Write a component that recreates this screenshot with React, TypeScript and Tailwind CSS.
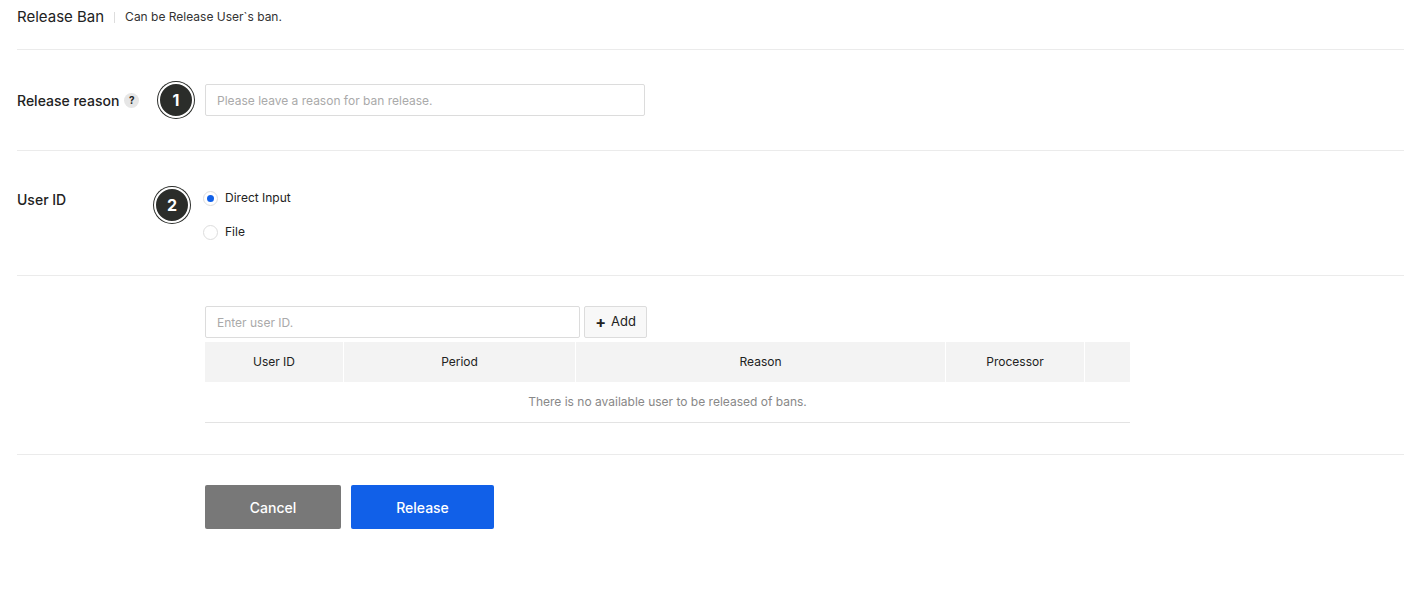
import React from "react";

function Badge({ n }: { n: number }) {
  return (
    <div className="w-[36px] h-[36px] rounded-full bg-[#2b2d2a] border-2 border-white ring-1 ring-[#2b2d2a] flex items-center justify-center text-white text-[16px] font-bold">
      {n}
    </div>
  );
}

export default function App() {
  return (
    <div className="bg-white min-h-[594px] pl-[17px] text-[#222] text-[13px]" style={{ fontFamily: "Inter, 'Noto Sans', sans-serif" }}>
      <div className="h-[50px] flex items-center border-b border-[#ebebeb] pb-[16px] pt-[1px]">
        <span className="text-[15px] text-[#222]">Release Ban</span>
        <span className="mx-[10px] w-px h-[11px] bg-[#ddd]" />
        <span className="text-[12px] text-[#333]">Can be Release User`s ban.</span>
      </div>
      <div className="h-[101px] flex items-center border-b border-[#ebebeb]">
        <div className="w-[141px] flex items-center">
          <span className="text-[14px] font-medium">Release reason</span>
          <span className="ml-[5px] w-[15px] h-[15px] rounded-full bg-[#e6e6e6] text-[10px] font-bold flex items-center justify-center">?</span>
        </div>
        <Badge n={1} />
        <input className="ml-[11px] w-[440px] h-[32px] border border-[#dcdcdc] rounded-[2px] px-[11px] text-[12px] outline-none placeholder:text-[#aaa]" placeholder="Please leave a reason for ban release." />
      </div>
      <div className="h-[125px] flex items-start border-b border-[#ebebeb] pt-[36px]">
        <div className="w-[137px] text-[14px] font-medium pt-[2px]">User ID</div>
        <Badge n={2} />
        <div className="ml-[13px] flex flex-col gap-[16px] pt-[2px]">
          <label className="flex items-center gap-[7px] text-[12px]">
            <span className="w-[15px] h-[15px] rounded-full border border-[#ddd] flex items-center justify-center"><span className="w-[7px] h-[7px] rounded-full bg-[#1160e8]" /></span>
            Direct Input
          </label>
          <label className="flex items-center gap-[7px] text-[12px]">
            <span className="w-[15px] h-[15px] rounded-full border border-[#ddd]" />
            File
          </label>
        </div>
      </div>
      <div className="h-[179px] border-b border-[#ebebeb] pl-[188px] pt-[30px]">
        <div className="flex gap-[4px]">
          <input className="w-[375px] h-[32px] border border-[#dcdcdc] rounded-[2px] px-[11px] text-[12px] outline-none placeholder:text-[#aaa]" placeholder="Enter user ID." />
          <button className="w-[63px] h-[32px] border border-[#dcdcdc] bg-[#f8f8f8] rounded-[2px] flex items-center justify-center gap-[5px] text-[13px]">
            <span className="text-[16px] font-bold leading-none">+</span>Add
          </button>
        </div>
        <div className="w-[925px] mt-[4px]">
          <div className="flex h-[40px] gap-px text-[12px]">
            <div className="w-[138px] bg-[#f3f3f3] flex items-center justify-center">User ID</div>
            <div className="w-[231px] bg-[#f3f3f3] flex items-center justify-center">Period</div>
            <div className="w-[369px] bg-[#f3f3f3] flex items-center justify-center">Reason</div>
            <div className="w-[138px] bg-[#f3f3f3] flex items-center justify-center">Processor</div>
            <div className="flex-1 bg-[#f3f3f3]" />
          </div>
          <div className="h-[41px] border-b border-[#e3e3e3] flex items-center justify-center text-[12px] text-[#888]">
            There is no available user to be released of bans.
          </div>
        </div>
      </div>
      <div className="pl-[188px] pt-[30px] flex gap-[10px]">
        <button className="w-[136px] h-[44px] bg-[#787878] text-white text-[14px] font-medium rounded-[2px]">Cancel</button>
        <button className="w-[143px] h-[44px] bg-[#1160e8] text-white text-[14px] font-medium rounded-[2px]">Release</button>
      </div>
    </div>
  );
}
